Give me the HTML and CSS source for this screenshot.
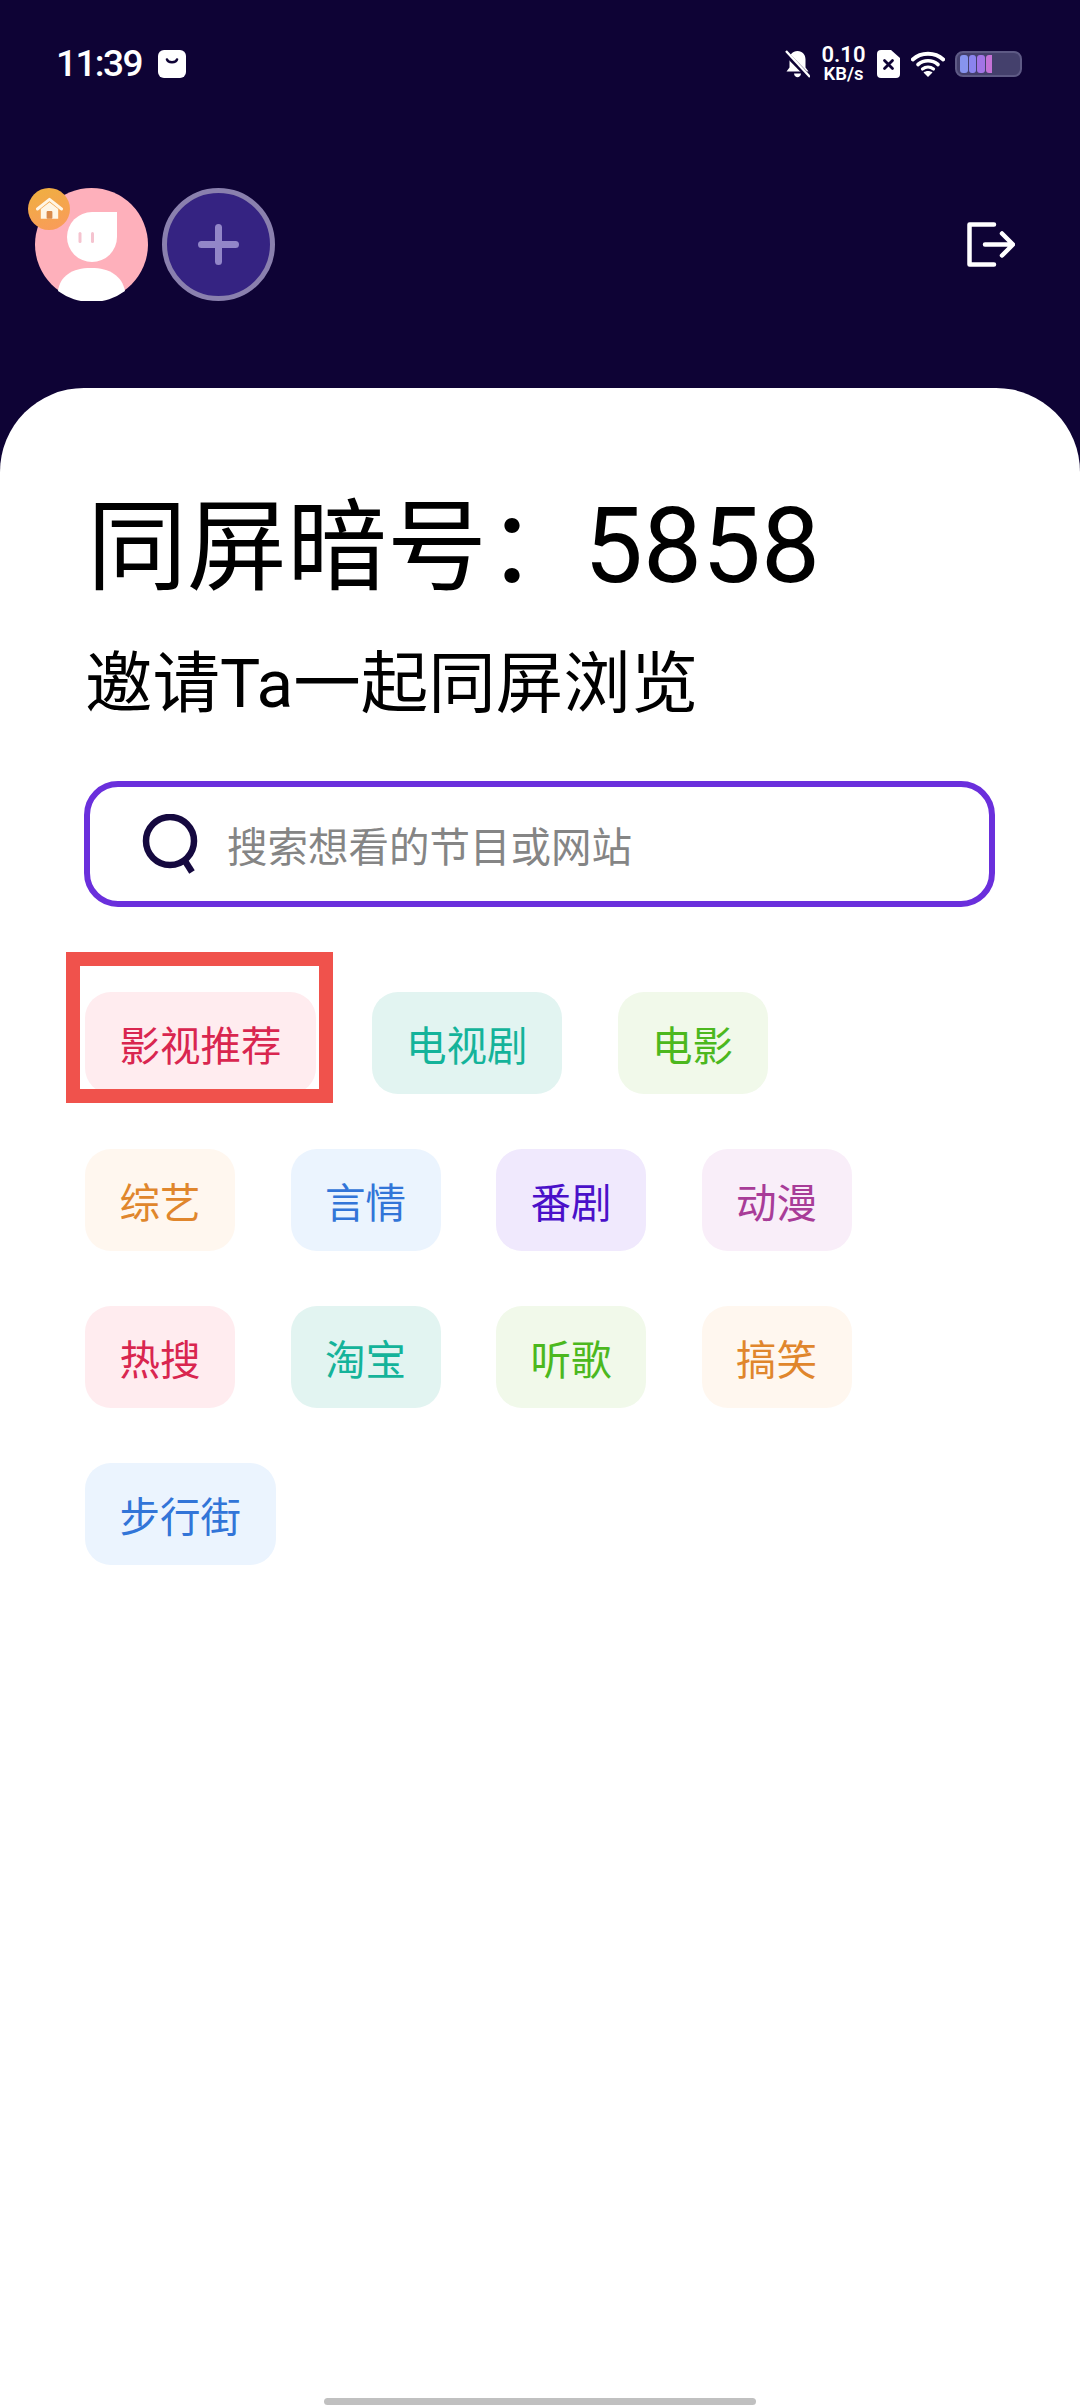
FILE: index.html
```html
<!DOCTYPE html>
<html lang="zh-CN">
<head>
  <meta charset="UTF-8">
  <title>同屏</title>
  <link rel="stylesheet" href="styles.css">
</head>
<body>
  <div class="page">
    <!-- Dark top area -->
    <div class="top">
      <div class="status-bar">
        <div class="status-left">
          <span class="time">11:39</span>
          <svg class="bag-icon" viewBox="0 0 28 28">
            <rect width="28" height="28" rx="6" fill="#fff"/>
            <path d="M9 9.500c1 3.600 9 3.600 10 0" fill="none" stroke="#0e0335" stroke-width="2.600" stroke-linecap="round"/>
          </svg>
        </div>
        <div class="status-right">
          <svg class="bell-icon" viewBox="0 0 25 28">
            <path d="M12.500 1c5 0 8 3.600 8 8.500v8l3 4H1.500l3-4v-8C4.500 4.600 7.500 1 12.500 1z" fill="#fff"/>
            <path d="M9 23.500h7c-.5 5-6.500 5-7 0z" fill="#fff"/>
            <path d="M0 2.500 24.500 27.500" stroke="#0e0335" stroke-width="5"/>
            <path d="M1 1 25 27" stroke="#fff" stroke-width="2.400"/>
          </svg>
          <div class="speed">
            <span class="speed-num">0.10</span>
            <span class="speed-unit">KB/s</span>
          </div>
          <svg class="sim-icon" viewBox="0 0 23 28">
            <path d="M4 0h10l9 8v16a4 4 0 0 1-4 4H4a4 4 0 0 1-4-4V4a4 4 0 0 1 4-4z" fill="#fff"/>
            <path d="M7.500 10.500l8 8M15.500 10.500l-8 8" stroke="#0e0335" stroke-width="2.800" stroke-linecap="round"/>
          </svg>
          <svg class="wifi-icon" viewBox="0 0 34 26">
            <path d="M1.800 8.500C10 .8 24 .8 32.200 8.500" fill="none" stroke="#fff" stroke-width="3.800" stroke-linecap="round"/>
            <path d="M7 13.500c6-5 14-5 20 0" fill="none" stroke="#fff" stroke-width="3.600" stroke-linecap="round"/>
            <path d="M11.500 18c3.200-2.500 7.800-2.500 11 0" fill="none" stroke="#fff" stroke-width="3.200" stroke-linecap="round"/>
            <path d="M17 26l-4.500-4.500c2.500-2 6.500-2 9 0z" fill="#fff"/>
          </svg>
          <div class="battery">
            <span class="cell cell-1"></span>
            <span class="cell cell-2"></span>
            <span class="cell cell-3"></span>
            <span class="cell cell-4"></span>
          </div>
        </div>
      </div>

      <div class="room-bar">
        <div class="members">
          <div class="avatar">
            <svg class="avatar-img" viewBox="0 0 113 113">
              <circle cx="56.500" cy="56.500" r="56.500" fill="#feb0bb"/>
              <path d="M82 24v25a25 25 0 1 1-25-25z" fill="#fff"/>
              <rect x="43.500" y="44" width="3" height="11" rx="1.500" fill="#f5c3cf"/>
              <rect x="56" y="44" width="3" height="11" rx="1.500" fill="#f5c3cf"/>
              <path d="M23 103c2-15 14-23 33-23s31 8 34 23a56.500 56.500 0 0 1-67 0z" fill="#fff"/>
            </svg>
            <div class="home-badge">
              <svg viewBox="0 0 28 24" class="home-icon">
                <path d="M1.500 12 14 2l12.500 10" fill="none" stroke="#fff6e6" stroke-width="3" stroke-linecap="round" stroke-linejoin="round"/>
                <path d="M5 12 14 5l9 7v10H5z" fill="#fff6e6"/>
                <rect x="11" y="14" width="6" height="8" rx="1" fill="#d98a4a"/>
              </svg>
            </div>
          </div>
          <div class="add-btn">
            <svg viewBox="0 0 41 41" class="plus-icon">
              <path d="M20.500 3.500v34M3.500 20.500h34" stroke="#9286c8" stroke-width="7" stroke-linecap="round"/>
            </svg>
          </div>
        </div>
        <svg class="logout-icon" viewBox="0 0 48 45">
          <path d="M27 2.500H2.500v40H27" fill="none" stroke="#fff" stroke-width="4.500" stroke-linecap="round" stroke-linejoin="round"/>
          <path d="M18 22.500h27M35 11.500l11 11-11 11" fill="none" stroke="#fff" stroke-width="4.500" stroke-linecap="round" stroke-linejoin="round"/>
        </svg>
      </div>
    </div>

    <!-- White card -->
    <div class="card">
      <h1 class="code">同屏暗号：<span class="code-num">5858</span></h1>
      <p class="invite">邀请Ta一起同屏浏览</p>

      <div class="search">
        <svg class="search-icon" viewBox="0 0 60 60">
          <circle cx="29" cy="27" r="24" fill="none" stroke="#15093f" stroke-width="6.500"/>
          <path d="M44 47l7 11" stroke="#15093f" stroke-width="6.500"/>
        </svg>
        <span class="search-text">搜索想看的节目或网站</span>
      </div>

      <div class="tags">
        <div class="tag-row">
          <div class="tag-wrap">
            <span class="tag red">影视推荐</span>
            <div class="red-frame"></div>
          </div>
          <span class="tag teal">电视剧</span>
          <span class="tag green">电影</span>
        </div>
        <div class="tag-row">
          <span class="tag orange">综艺</span>
          <span class="tag blue">言情</span>
          <span class="tag purple">番剧</span>
          <span class="tag pink">动漫</span>
        </div>
        <div class="tag-row">
          <span class="tag red">热搜</span>
          <span class="tag teal">淘宝</span>
          <span class="tag green">听歌</span>
          <span class="tag orange">搞笑</span>
        </div>
        <div class="tag-row">
          <span class="tag blue">步行街</span>
        </div>
      </div>

      <div class="home-bar"></div>
    </div>
  </div>
</body>
</html>
```

FILE: styles.css
```css
html, body {
  margin: 0;
  padding: 0;
  height: 100%;
  overflow: hidden;
  font-family: Roboto, "Noto Sans CJK SC", sans-serif;
}

.page {
  width: 1080px;
  height: 2408px;
  display: flex;
  flex-direction: column;
  background: #0e0335;
}

/* Top area */
.top {
  height: 388px;
  flex-shrink: 0;
  box-sizing: border-box;
  padding-top: 46px;
}

.status-bar {
  height: 36px;
  display: flex;
  justify-content: space-between;
  align-items: center;
  padding: 0 58px 0 56px;
}

.status-left {
  display: flex;
  align-items: center;
  gap: 16px;
}

.time {
  color: #fff;
  font-size: 37px;
  font-weight: 500;
  letter-spacing: -1.600px;
  line-height: 36px;
}

.bag-icon {
  width: 28px;
  height: 28px;
  display: block;
}

.status-right {
  display: flex;
  align-items: center;
}

.bell-icon {
  width: 25px;
  height: 28px;
  margin-right: 12px;
}

.speed {
  width: 43px;
  margin-right: 12px;
  display: flex;
  flex-direction: column;
  align-items: center;
  color: #fff;
  font-weight: 600;
}

.speed-num {
  font-size: 22px;
  line-height: 20px;
}

.speed-unit {
  font-size: 18.500px;
  line-height: 18px;
}

.sim-icon {
  width: 23px;
  height: 28px;
  margin-right: 11px;
}

.wifi-icon {
  width: 34px;
  height: 26px;
  margin-right: 10px;
}

.battery {
  width: 67px;
  height: 26px;
  box-sizing: border-box;
  padding: 2px 3px;
  display: flex;
  gap: 1px;
  background: #44406c;
  border: 2px solid #5e5a85;
  border-radius: 8px;
}

.cell {
  width: 7.500px;
  border-radius: 3px;
}

.cell-1 { background: #8794ee; }
.cell-2 { background: #8b84ee; }
.cell-3 { background: #a274e6; }
.cell-4 { background: #c472d6; border-radius: 3px 0 0 3px; width: 6px; }

.room-bar {
  margin-top: 106px;
  padding: 0 65px 0 35px;
  display: flex;
  justify-content: space-between;
  align-items: center;
}

.members {
  display: flex;
  gap: 14px;
}

.avatar {
  position: relative;
  width: 113px;
  height: 113px;
}

.avatar-img {
  width: 113px;
  height: 113px;
  display: block;
}

.home-badge {
  position: absolute;
  top: 0;
  left: -7px;
  width: 42px;
  height: 42px;
  border-radius: 50%;
  background: linear-gradient(160deg, #efb03f, #fa9a5c);
  display: flex;
  align-items: center;
  justify-content: center;
}

.home-icon {
  width: 27px;
  height: 24px;
}

.add-btn {
  width: 113px;
  height: 113px;
  box-sizing: border-box;
  border: 5px solid #8a80ae;
  border-radius: 50%;
  background: #352382;
  display: flex;
  align-items: center;
  justify-content: center;
}

.plus-icon {
  width: 41px;
  height: 41px;
}

.logout-icon {
  width: 48px;
  height: 45px;
}

/* White card */
.card {
  flex: 1;
  box-sizing: border-box;
  padding: 0 84px;
  background: #fff;
  border-radius: 84px 84px 0 0;
  display: flex;
  flex-direction: column;
}

.code {
  margin: 94px 0 0 3px;
  height: 130px;
  font-size: 100px;
  font-weight: 400;
  line-height: 130px;
  color: #000;
}

.code-num {
  font-size: 105px;
  margin-left: -3px;
}

.invite {
  margin: 28px 0 0 1px;
  font-size: 67.500px;
  line-height: 88px;
  color: #000;
}

.search {
  margin-top: 53px;
  height: 126px;
  width: 911px;
  box-sizing: border-box;
  border: 6px solid #6a2fdc;
  border-radius: 34px;
  display: flex;
  align-items: center;
  padding-left: 51px;
  gap: 26px;
}

.search-icon {
  width: 60px;
  height: 60px;
  flex-shrink: 0;
}

.search-text {
  font-size: 40.500px;
  color: #858585;
}

.tags {
  margin: 85px 0 0 1px;
  display: flex;
  flex-direction: column;
  gap: 55px;
}

.tag-row {
  display: flex;
  gap: 55.500px;
}

.tag-wrap {
  position: relative;
  display: flex;
}

.tag {
  height: 102px;
  box-sizing: border-box;
  padding: 0 34.500px;
  border-radius: 26px;
  display: flex;
  align-items: center;
  font-size: 40.500px;
  white-space: nowrap;
}

.red { color: #d9264f; background: #ffecef; }
.teal { color: #14b39a; background: #e2f4f1; }
.green { color: #4cb81e; background: #f1f9ea; }
.orange { color: #e0862c; background: #fff7ef; }
.blue { color: #3275d8; background: #ebf4fe; }
.purple { color: #4a10c9; background: #f0e9fd; }
.pink { color: #a83c98; background: #f9eef9; }

/* Red annotation frame, drawn over the first tag */
.red-frame {
  position: absolute;
  top: -40px;
  left: -19px;
  width: 267px;
  height: 151px;
  box-sizing: border-box;
  border: 14px solid #f0524c;
}

.home-bar {
  margin: auto auto 3px;
  width: 432px;
  height: 7px;
  border-radius: 4px;
  background: #c0c0c0;
}
```
